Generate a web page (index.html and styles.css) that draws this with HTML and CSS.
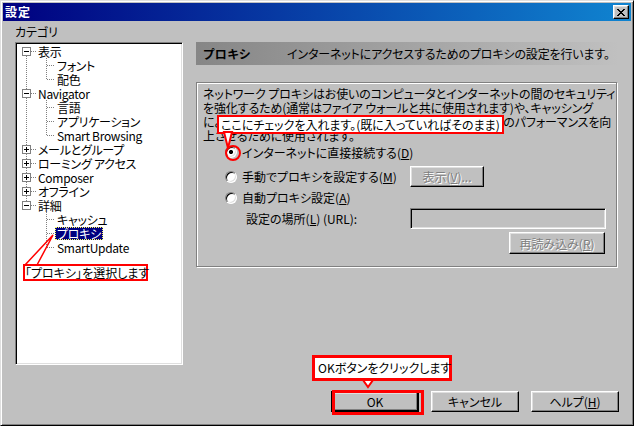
FILE: index.html
```html
<!DOCTYPE html>
<html lang="ja">
<head>
<meta charset="utf-8">
<title>設定</title>
<link rel="stylesheet" href="styles.css">
</head>
<body>
<div class="window">
  <div class="titlebar">
    <span class="title">設定</span>
    <span class="close"><svg width="8" height="7" viewBox="0 0 8 7" shape-rendering="crispEdges"><path d="M0 0h2v1H0z M6 0h2v1H6z M1 1h2v1H1z M5 1h2v1H5z M2 2h4v1H2z M3 3h2v1H3z M2 4h4v1H2z M1 5h2v1H1z M5 5h2v1H5z M0 6h2v1H0z M6 6h2v1H6z" fill="#000"/></svg></span>
  </div>
  <div class="content">
    <div class="main">
      <div class="left">
        <div class="cat-label">カテゴリ</div>
        <div class="tree">
          <div class="row"><span class="tw first"><span class="box"></span></span><span class="lbl">表示</span></div>
          <div class="row"><span class="pass cont"></span><span class="elbow"></span><span class="lbl">フォント</span></div>
          <div class="row"><span class="pass cont"></span><span class="elbow last"></span><span class="lbl">配色</span></div>
          <div class="row"><span class="tw"><span class="box"></span></span><span class="lbl">Navigator</span></div>
          <div class="row"><span class="pass cont"></span><span class="elbow"></span><span class="lbl">言語</span></div>
          <div class="row"><span class="pass cont"></span><span class="elbow"></span><span class="lbl">アプリケーション</span></div>
          <div class="row"><span class="pass cont"></span><span class="elbow last"></span><span class="lbl">Smart Browsing</span></div>
          <div class="row"><span class="tw"><span class="box plus"></span></span><span class="lbl">メールとグループ</span></div>
          <div class="row"><span class="tw"><span class="box plus"></span></span><span class="lbl">ローミング アクセス</span></div>
          <div class="row"><span class="tw"><span class="box plus"></span></span><span class="lbl">Composer</span></div>
          <div class="row"><span class="tw"><span class="box plus"></span></span><span class="lbl">オフライン</span></div>
          <div class="row"><span class="tw last"><span class="box"></span></span><span class="lbl">詳細</span></div>
          <div class="row"><span class="pass"></span><span class="elbow"></span><span class="lbl">キャッシュ</span></div>
          <div class="row"><span class="pass"></span><span class="elbow"></span><span class="lbl sel">プロキシ</span></div>
          <div class="row"><span class="pass"></span><span class="elbow last"></span><span class="lbl">SmartUpdate</span></div>
        </div>
      </div>
      <div class="right">
        <div class="header"><span class="h-title">プロキシ</span><span class="h-desc">インターネットにアクセスするためのプロキシの設定を行います。</span></div>
        <div class="group">
          <div class="desc">
            <div class="line">ネットワーク プロキシはお使いのコンピュータとインターネットの間のセキュリティ</div>
            <div class="line">を強化するため(通常はファイア ウォールと共に使用されます)や、キャッシング</div>
            <div class="line">によってネットワーク上の通信量を軽減することにより、全体のパフォーマンスを向</div>
            <div class="line">上させるために使用されます。</div>
          </div>
          <div class="opts">
            <div class="opt r1"><span class="radio on"></span><span>インターネットに直接接続する(<u>D</u>)</span></div>
            <div class="opt r2"><div class="col1"><span class="radio"></span><span>手動でプロキシを設定する(<u>M</u>)</span></div><span class="btn disabled view">表示(<u>V</u>)...</span></div>
            <div class="opt r3"><span class="radio"></span><span>自動プロキシ設定(<u>A</u>)</span></div>
            <div class="opt r4"><div class="col1 indent">設定の場所(<u>L</u>) (URL):</div><span class="field"></span></div>
            <div class="opt r5"><span class="btn disabled reload">再読み込み(<u>R</u>)</span></div>
          </div>
        </div>
      </div>
    </div>
    <div class="buttons">
      <span class="btn big default">OK</span>
      <span class="btn big">キャンセル</span>
      <span class="btn big">ヘルプ(<u>H</u>)</span>
    </div>
  </div>

  <div class="callout c-check">ここにチェックを入れます。(既に入っていればそのまま)</div>
  <svg class="ptr p-check" width="30" height="30" viewBox="0 0 30 30"><polygon points="3,1 11,1 7,17" fill="#fff" stroke="#f00" stroke-width="2"/><circle cx="12" cy="22" r="7" fill="none" stroke="#f00" stroke-width="2"/></svg>
  <div class="callout c-tree">「プロキシ」を選択します</div>
  <svg class="ptr p-tree" width="40" height="34" viewBox="0 0 40 34"><polyline points="4,33 32,3 16,33" fill="none" stroke="#f00" stroke-width="1.5"/></svg>
  <div class="callout c-ok">OKボタンをクリックします</div>
  <svg class="ptr p-ok" width="14" height="10" viewBox="0 0 14 10"><polygon points="2,1 12,1 7,8" fill="#fff" stroke="#f00" stroke-width="2"/></svg>
  <div class="ok-mark"></div>
</div>
</body>
</html>
```

FILE: styles.css
```css
* { box-sizing: border-box; }
html, body { margin: 0; padding: 0; }
body {
  width: 634px;
  height: 426px;
  overflow: hidden;
  background: #c0c0c0;
  color: #000;
  font-family: "Noto Sans CJK JP", "Noto Sans", sans-serif;
  font-size: 12px;
  font-feature-settings: "palt" 1;
}
u { text-decoration: underline; text-underline-offset: 1px; }

.window {
  position: relative;
  width: 634px;
  height: 426px;
  background: #c0c0c0;
  border: 1px solid;
  border-color: #dfdfdf #000 #000 #dfdfdf;
  box-shadow: inset 1px 1px #fff, inset -1px -1px #808080;
  padding: 2px;
  display: flex;
  flex-direction: column;
}

.titlebar {
  height: 18px;
  flex: none;
  background: linear-gradient(to right, #000080, #1084d0);
  display: flex;
  align-items: center;
  justify-content: space-between;
  padding: 0 2px;
}
.title { color: #fff; font-weight: bold; font-size: 12px; line-height: 18px; letter-spacing: 1px; }
.close {
  width: 16px;
  height: 14px;
  background: #c0c0c0;
  border: 1px solid;
  border-color: #fff #000 #000 #fff;
  box-shadow: inset -1px -1px #808080, inset 1px 1px #dfdfdf;
  display: flex;
  align-items: center;
  justify-content: center;
  padding-right: 1px;
}

.content {
  flex: 1;
  display: flex;
  flex-direction: column;
  padding: 0 12px 11px 12px;
}
.main { display: flex; gap: 13px; }
.left { width: 168px; flex: none; display: flex; flex-direction: column; }
.cat-label { height: 21px; line-height: 14px; padding-top: 4px; }

.tree {
  height: 323px;
  background: #fff;
  border: 1px solid;
  border-color: #808080 #fff #fff #808080;
  box-shadow: inset 1px 1px #000, inset -1px -1px #dfdfdf;
  padding: 1px;
  font-size: 12px;
}
.row { height: 14px; display: flex; align-items: center; white-space: nowrap; }
.lbl { height: 13px; line-height: 13px; padding: 0 2px; letter-spacing: -0.3px; }
.lbl.sel { background: #000080; color: #fff; outline: 1px dotted #ffff60; outline-offset: -1px; }

.tw {
  width: 19px; height: 14px; flex: none;
  display: flex; align-items: center;
  padding-left: 5px;
  background:
    repeating-linear-gradient(to right, #808080 0 1px, transparent 1px 2px) 14px 7px / 5px 1px no-repeat,
    repeating-linear-gradient(to bottom, #808080 0 1px, transparent 1px 2px) 9px 0 / 1px 14px no-repeat;
}
.tw.first {
  background:
    repeating-linear-gradient(to right, #808080 0 1px, transparent 1px 2px) 14px 7px / 5px 1px no-repeat,
    repeating-linear-gradient(to bottom, #808080 0 1px, transparent 1px 2px) 9px 8px / 1px 6px no-repeat;
}
.tw.last {
  background:
    repeating-linear-gradient(to right, #808080 0 1px, transparent 1px 2px) 14px 7px / 5px 1px no-repeat,
    repeating-linear-gradient(to bottom, #808080 0 1px, transparent 1px 2px) 9px 0 / 1px 7px no-repeat;
}
.box {
  width: 9px; height: 9px;
  border: 1px solid #808080;
  background:
    linear-gradient(#000, #000) 1px 3px / 5px 1px no-repeat,
    #fff;
}
.box.plus {
  background:
    linear-gradient(#000, #000) 1px 3px / 5px 1px no-repeat,
    linear-gradient(#000, #000) 3px 1px / 1px 5px no-repeat,
    #fff;
}
.pass { width: 20px; height: 14px; flex: none; }
.pass.cont {
  background: repeating-linear-gradient(to bottom, #808080 0 1px, transparent 1px 2px) 9px 0 / 1px 14px no-repeat;
}
.elbow {
  width: 18px; height: 14px; flex: none;
  background:
    repeating-linear-gradient(to right, #808080 0 1px, transparent 1px 2px) 10px 7px / 8px 1px no-repeat,
    repeating-linear-gradient(to bottom, #808080 0 1px, transparent 1px 2px) 9px 0 / 1px 14px no-repeat;
}
.elbow.last {
  background:
    repeating-linear-gradient(to right, #808080 0 1px, transparent 1px 2px) 10px 7px / 8px 1px no-repeat,
    repeating-linear-gradient(to bottom, #808080 0 1px, transparent 1px 2px) 9px 0 / 1px 8px no-repeat;
}

.right { flex: 1; display: flex; flex-direction: column; margin-top: 21px; }
.header {
  height: 23px;
  background: linear-gradient(to right, #868686, #c0c0c0);
  display: flex;
  align-items: center;
  padding-left: 7px;
  white-space: nowrap;
}
.h-title { font-weight: bold; width: 84px; flex: none; letter-spacing: 0.5px; }
.h-desc { letter-spacing: -0.15px; }

.group {
  margin-top: 17px;
  width: 421px;
  height: 185px;
  border: 1px solid #808080;
  box-shadow: inset 1px 1px #fff, 1px 1px #fff;
  padding: 4px 0 0 0;
  overflow: hidden;
}
.desc { padding-left: 6px; }
.line { height: 14px; line-height: 14px; white-space: nowrap; letter-spacing: -0.12px; }

.opts { padding-left: 28px; display: flex; flex-direction: column; }
.opt { display: flex; align-items: center; white-space: nowrap; }
.r1 { height: 20px; margin-top: -1px; }
.r2 { height: 21px; margin-top: 4px; }
.r3 { height: 21px; }
.r4 { height: 21px; }
.r5 { height: 22px; margin-top: 3px; justify-content: flex-end; padding-right: 11px; }
.col1 { width: 185px; flex: none; display: flex; align-items: center; }
.col1.indent { padding-left: 21px; }

.radio {
  width: 12px; height: 12px; flex: none;
  border-radius: 50%;
  background: #fff;
  border: 1px solid;
  border-color: #808080 #fff #fff #808080;
  box-shadow: inset 1px 1px #000, inset -1px -1px #dfdfdf;
  margin-right: 5px;
}
.radio.on {
  background: radial-gradient(circle, #000 0 2px, #fff 2.2px);
}

.btn {
  display: inline-flex;
  align-items: center;
  justify-content: center;
  height: 21px;
  background: #c0c0c0;
  border: 1px solid;
  border-color: #fff #000 #000 #fff;
  box-shadow: inset -1px -1px #808080, inset 1px 1px #dfdfdf;
  white-space: nowrap;
  flex: none;
}
.btn.disabled { color: #808080; text-shadow: 1px 1px #fff; }
.btn.view { width: 74px; }
.btn.reload { width: 96px; height: 22px; }
.field {
  width: 196px; height: 21px; flex: none;
  background: #c0c0c0;
  border: 1px solid;
  border-color: #808080 #fff #fff #808080;
  box-shadow: inset 1px 1px #000, inset -1px -1px #dfdfdf;
}

.buttons {
  margin-top: auto;
  display: flex;
  justify-content: flex-end;
  gap: 12px;
}
.btn.big { width: 88px; }
.btn.default {
  border-color: #000;
  box-shadow: inset 1px 1px #fff, inset -1px -1px #000, inset -2px -2px #808080, inset 2px 2px #dfdfdf;
}

.callout {
  position: absolute;
  background: #fff;
  border: 2px solid #f00;
  white-space: nowrap;
  font-size: 12px;
}
.c-check { left: 216px; top: 114px; width: 287px; height: 19px; line-height: 15px; padding-left: 2px; }
.c-tree { left: 22px; top: 263px; width: 125px; height: 17px; line-height: 13px; padding-left: 0; }
.c-ok { left: 311px; top: 354px; width: 140px; height: 26px; line-height: 20px; padding-left: 3px; border-width: 3px; }
.ptr { position: absolute; overflow: visible; }
.p-check { left: 220px; top: 130px; }
.p-tree { left: 20px; top: 231px; }
.p-ok { left: 360px; top: 378px; }
.ok-mark {
  position: absolute;
  left: 331px; top: 389px;
  width: 92px; height: 25px;
  border: 3px solid #f00;
}
```
